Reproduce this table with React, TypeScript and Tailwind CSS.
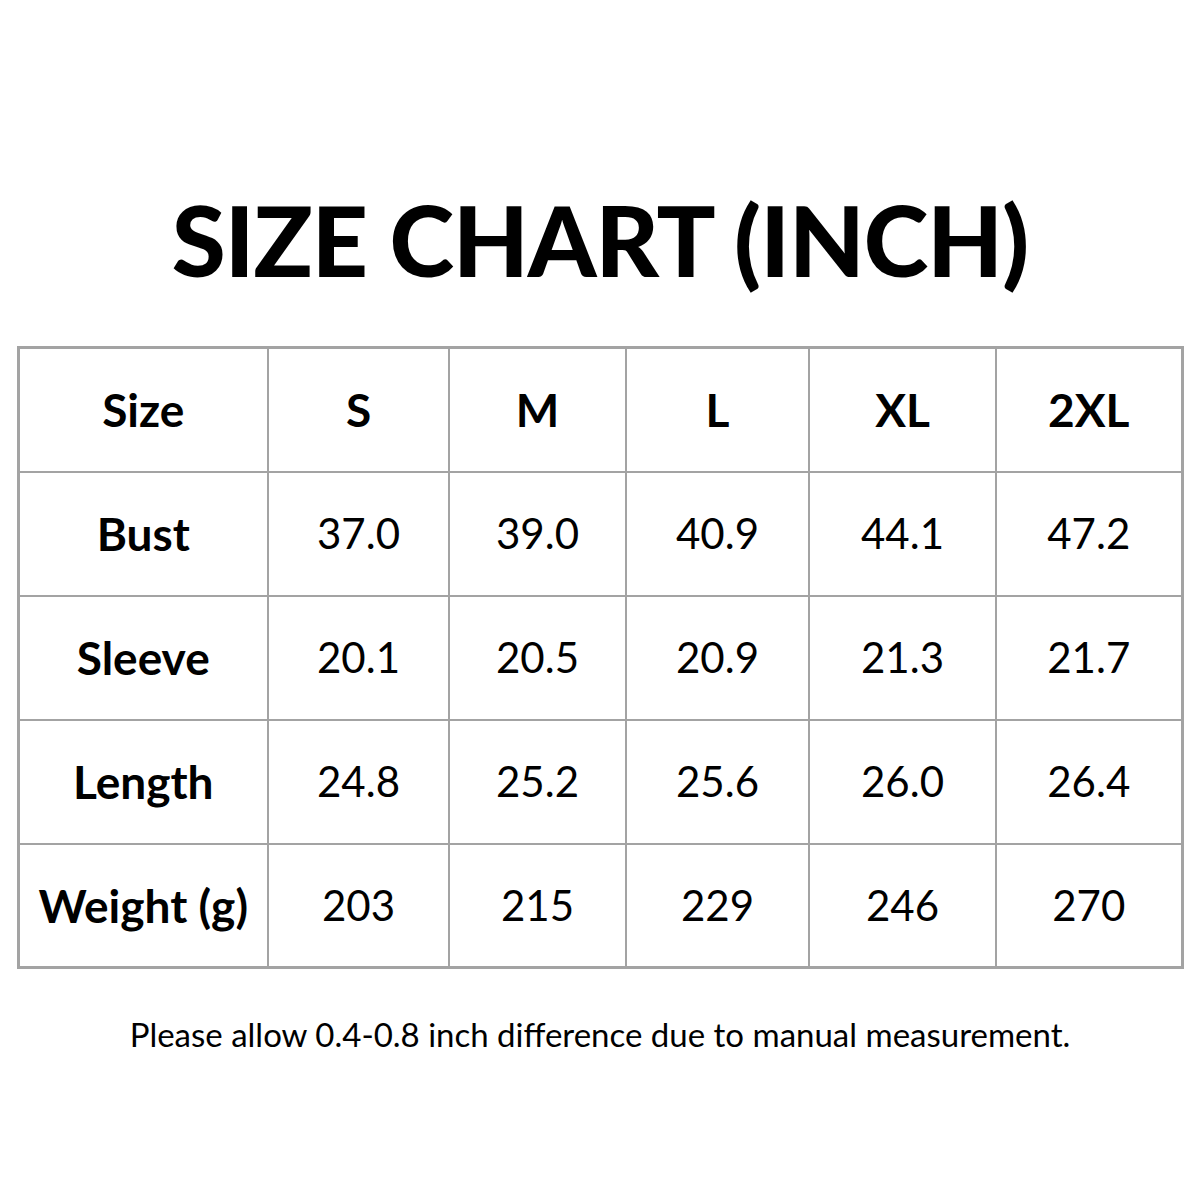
import React from "react";

const HEAD = ["Size", "S", "M", "L", "XL", "2XL"];

const ROWS: { label: string; values: string[] }[] = [
  { label: "Bust", values: ["37.0", "39.0", "40.9", "44.1", "47.2"] },
  { label: "Sleeve", values: ["20.1", "20.5", "20.9", "21.3", "21.7"] },
  { label: "Length", values: ["24.8", "25.2", "25.6", "26.0", "26.4"] },
  { label: "Weight (g)", values: ["203", "215", "229", "246", "270"] },
];

const COL_W = [250, 181, 177, 183, 187, 186];

export default function App() {
  return (
    <div
      className="w-[1200px] h-[1200px] bg-white text-black flex flex-col items-center"
      style={{ fontFamily: "Lato, 'Noto Sans', sans-serif" }}
    >
      <h1 className="mt-[180px] text-[98px] leading-[118px] font-black tracking-[-1px]">
        SIZE CHART (INCH)
      </h1>

      <table className="mt-[48px] border-collapse border-[3px] border-[#a3a3a3]">
        <colgroup>
          {COL_W.map((w, i) => (
            <col key={i} style={{ width: w }} />
          ))}
        </colgroup>
        <tbody>
          <tr className="h-[124px]">
            {HEAD.map((h) => (
              <td
                key={h}
                className="border-2 border-[#a3a3a3] text-center align-middle text-[46px] font-bold"
              >
                {h}
              </td>
            ))}
          </tr>
          {ROWS.map((r) => (
            <tr key={r.label} className="h-[124px]">
              <td className="border-2 border-[#a3a3a3] text-center align-middle text-[46px] font-bold whitespace-nowrap">
                {r.label}
              </td>
              {r.values.map((v, i) => (
                <td
                  key={i}
                  className="border-2 border-[#a3a3a3] text-center align-middle text-[42px]"
                >
                  {v}
                </td>
              ))}
            </tr>
          ))}
        </tbody>
      </table>

      <p className="mt-[46px] text-[33px] leading-[38px]">
        Please allow 0.4-0.8 inch difference due to manual measurement.
      </p>
    </div>
  );
}
